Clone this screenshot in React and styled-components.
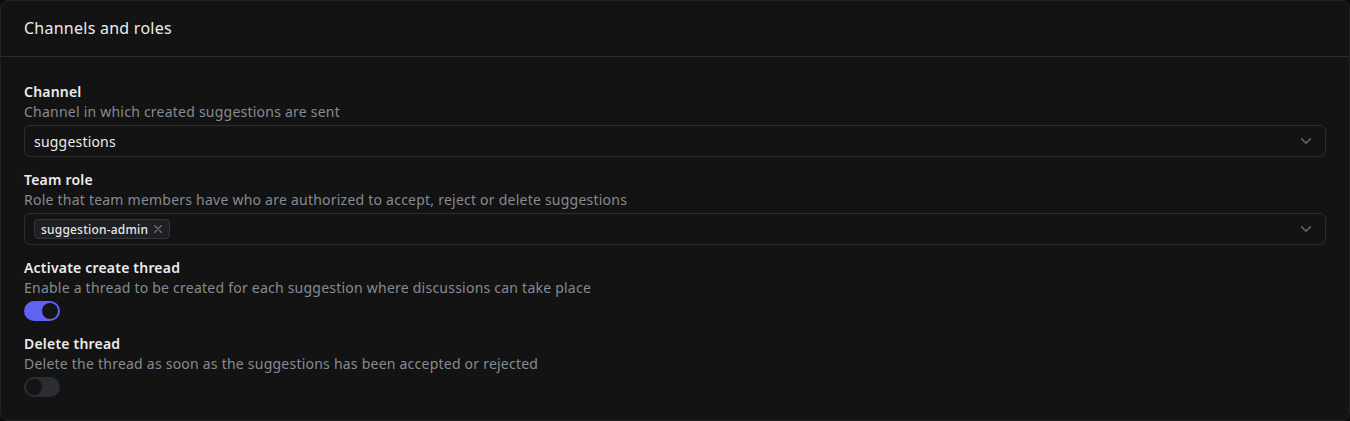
import styled, { createGlobalStyle } from "styled-components";
import { useState } from "react";

const GlobalStyle = createGlobalStyle`
  html, body {
    margin: 0;
    padding: 0;
    background: #0c0c0c;
  }
  body {
    font-family: "Noto Sans", "Open Sans", sans-serif;
    color: #ececec;
  }
`;

const fields = [
  {
    label: "Channel",
    description: "Channel in which created suggestions are sent",
    type: "select",
    value: "suggestions",
  },
  {
    label: "Team role",
    description:
      "Role that team members have who are authorized to accept, reject or delete suggestions",
    type: "multi",
    value: ["suggestion-admin"],
  },
  {
    label: "Activate create thread",
    description:
      "Enable a thread to be created for each suggestion where discussions can take place",
    type: "toggle",
    value: true,
  },
  {
    label: "Delete thread",
    description:
      "Delete the thread as soon as the suggestions has been accepted or rejected",
    type: "toggle",
    value: false,
  },
];

const Chevron = () => (
  <svg width="18" height="18" viewBox="0 0 24 24" fill="none" stroke="#6b7079" strokeWidth="1.6" strokeLinecap="round" strokeLinejoin="round">
    <path d="m6 9 6 6 6-6" />
  </svg>
);

const CloseIcon = () => (
  <svg width="10" height="10" viewBox="0 0 10 10" fill="none" stroke="#6b7079" strokeWidth="1.1" strokeLinecap="round">
    <path d="M1.5 1.5l7 7M8.5 1.5l-7 7" />
  </svg>
);

const Toggle = ({ initial }) => {
  const [on, setOn] = useState(initial);
  return (
    <Switch $on={on} onClick={() => setOn(!on)}>
      <Knob $on={on} />
    </Switch>
  );
};

const Field = ({ field }) => (
  <FieldBlock>
    <Label>{field.label}</Label>
    <Description>{field.description}</Description>
    {field.type === "select" && (
      <SelectBox>
        <SelectValue>{field.value}</SelectValue>
        <Chevron />
      </SelectBox>
    )}
    {field.type === "multi" && (
      <SelectBox>
        <Chips>
          {field.value.map((v) => (
            <Chip key={v}>
              {v}
              <CloseIcon />
            </Chip>
          ))}
        </Chips>
        <Chevron />
      </SelectBox>
    )}
    {field.type === "toggle" && <Toggle initial={field.value} />}
  </FieldBlock>
);

const App = () => {
  return (
    <>
      <GlobalStyle />
      <Card>
        <Header>Channels and roles</Header>
        <Body>
          {fields.map((f) => (
            <Field key={f.label} field={f} />
          ))}
        </Body>
      </Card>
    </>
  );
};

const Card = styled.div`
  background: #131313;
  border: 1px solid #222222;
  border-radius: 8px;
  height: 421px;
  box-sizing: border-box;
  overflow: hidden;
`;

const Header = styled.div`
  height: 56px;
  display: flex;
  align-items: center;
  padding: 0 23px 2px;
  box-sizing: border-box;
  font-size: 16px;
  font-weight: 400;
  letter-spacing: 0.25px;
  color: #ececec;
  border-bottom: 1px solid #2b2b2b;
`;

const Body = styled.div`
  display: flex;
  flex-direction: column;
  gap: 13px;
  padding: 25px 23px 24px;
`;

const FieldBlock = styled.div`
  display: flex;
  flex-direction: column;
`;

const Label = styled.div`
  font-size: 14px;
  font-weight: 600;
  line-height: 20px;
  letter-spacing: 0.2px;
  color: #ececec;
`;

const Description = styled.div`
  font-size: 14px;
  line-height: 20px;
  letter-spacing: 0.23px;
  color: #868b94;
  margin-bottom: 3px;
`;

const SelectBox = styled.div`
  height: 32px;
  box-sizing: border-box;
  border: 1px solid #2e2e2e;
  border-radius: 6px;
  display: flex;
  align-items: center;
  justify-content: space-between;
  padding: 0 10px 0 9px;
`;

const SelectValue = styled.span`
  font-size: 14px;
  letter-spacing: 0.2px;
  color: #ececec;
`;

const Chips = styled.div`
  display: flex;
  gap: 4px;
`;

const Chip = styled.span`
  display: inline-flex;
  align-items: center;
  gap: 5px;
  height: 18px;
  padding: 0 6px;
  font-size: 12px;
  font-weight: 500;
  letter-spacing: 0.2px;
  color: #e6e6e6;
  background: #1f2023;
  border: 1px solid #34353a;
  border-radius: 4px;
`;

const Switch = styled.button`
  width: 36px;
  height: 20px;
  padding: 2px;
  border: none;
  border-radius: 10px;
  background: ${(p) => (p.$on ? "#5f63f2" : "#2a2d32")};
  display: flex;
  justify-content: ${(p) => (p.$on ? "flex-end" : "flex-start")};
  align-items: center;
  cursor: pointer;
  box-sizing: border-box;
`;

const Knob = styled.span`
  width: 16px;
  height: 16px;
  border-radius: 50%;
  background: #141414;
`;

export default App;
